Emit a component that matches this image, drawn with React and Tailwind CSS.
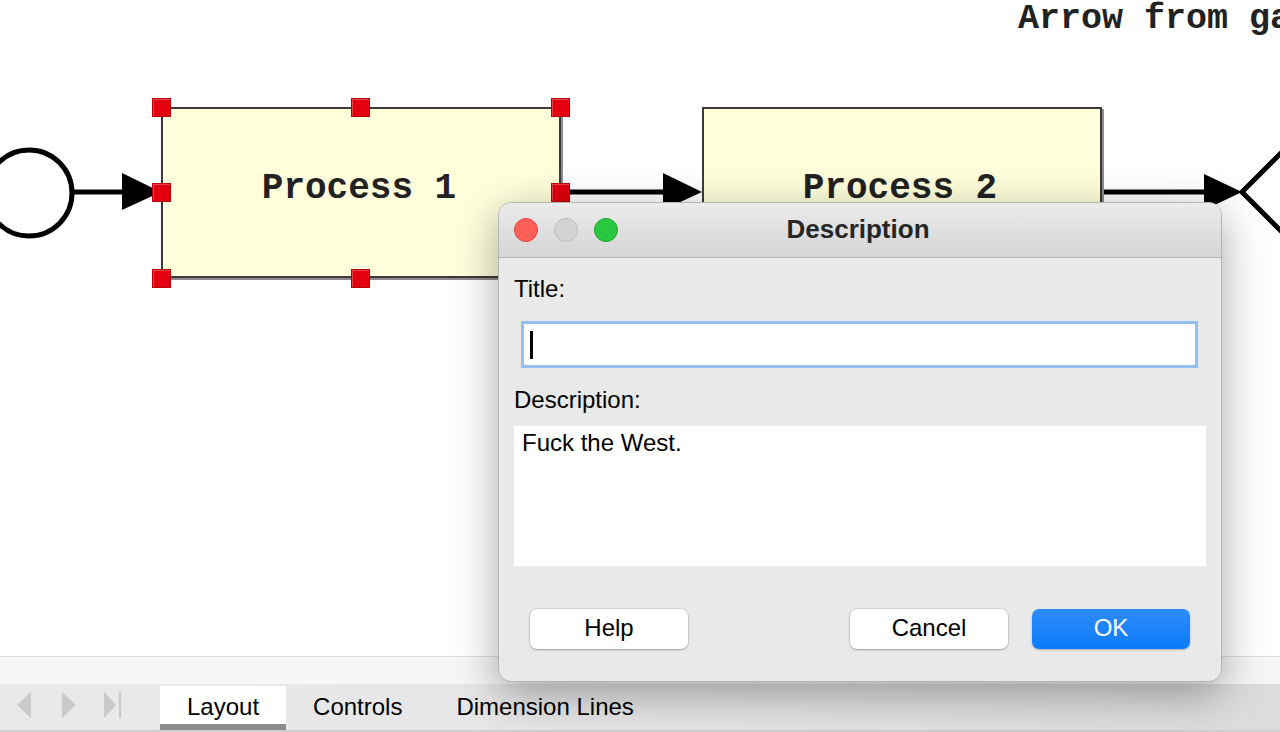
import React from "react";

const sans = { fontFamily: '"Liberation Sans", Arial, sans-serif' };
const mono = { fontFamily: '"Liberation Mono", "Courier New", monospace' };

// selection handle on a diagram node
function Handle({ x, y }) {
    return (
        <div
            className="absolute w-[19px] h-[19px] bg-[#e3000f] border border-[#b3000a] shadow-[inset_1px_1px_0_rgba(255,255,255,0.25)]"
            style={{ left: x - 9, top: y - 9 }}
        />
    );
}

function ProcessNode({ x, label, selected }) {
    return (
        <>
            <div
                className="absolute top-[107px] w-[400px] h-[171px] bg-[#ffffdb] border-2 border-[#3a3a3a] shadow-[2px_2px_0_#8c8c8c] flex items-center justify-center"
                style={{ left: x }}
            >
                <span className="text-[36px] font-bold text-[#222] -mt-[8px] -ml-[4px]" style={mono}>{label}</span>
            </div>
            {selected && (
                <>
                    <Handle x={x} y={107} />
                    <Handle x={x + 199} y={107} />
                    <Handle x={x + 399} y={107} />
                    <Handle x={x} y={192} />
                    <Handle x={x + 399} y={192} />
                    <Handle x={x} y={278} />
                    <Handle x={x + 199} y={278} />
                </>
            )}
        </>
    );
}

function Connectors() {
    return (
        <svg className="absolute inset-0" width="1280" height="656" viewBox="0 0 1280 656">
            <circle cx="29" cy="193" r="43" fill="white" stroke="black" strokeWidth="5" />
            <line x1="74" y1="192" x2="126" y2="192" stroke="black" strokeWidth="5" />
            <polygon points="122,173 161,192 122,210" fill="black" />
            <line x1="560" y1="192" x2="666" y2="192" stroke="black" strokeWidth="5" />
            <polygon points="663,173 702,192 663,210" fill="black" />
            <line x1="1101" y1="192" x2="1208" y2="192" stroke="black" strokeWidth="5" />
            <polygon points="1204,174 1242,192 1204,210" fill="black" />
            <polygon points="1242,192 1300,134 1358,192 1300,250" fill="white" stroke="black" strokeWidth="5" />
        </svg>
    );
}

function TrafficLights() {
    return (
        <div className="flex items-center gap-[16px] pl-[15px]">
            <span className="w-[24px] h-[24px] rounded-full bg-[#fe5f57] border border-[#e2463f]" />
            <span className="w-[24px] h-[24px] rounded-full bg-[#d3d3d3] border border-[#bebebe]" />
            <span className="w-[24px] h-[24px] rounded-full bg-[#29c840] border border-[#1ca92e]" />
        </div>
    );
}

function DialogButton({ children, primary }) {
    return (
        <button
            className={
                primary
                    ? "w-[158px] h-[40px] rounded-[7px] bg-gradient-to-b from-[#2b8cfb] to-[#0a7bf9] text-white text-[24px] leading-[24px] pb-[2px] shadow-[0_1px_2px_rgba(0,0,0,0.25)]"
                    : "w-[158px] h-[40px] rounded-[7px] bg-white text-black text-[24px] leading-[24px] pb-[2px] shadow-[0_0_0_1px_rgba(0,0,0,0.08),0_1px_2px_rgba(0,0,0,0.25)]"
            }
        >
            {children}
        </button>
    );
}

function DescriptionDialog() {
    return (
        <div
            className="absolute left-[498px] top-[202px] w-[724px] h-[480px] rounded-[13px] overflow-hidden bg-[#e9e9e9] border border-[#b4b4b4] shadow-[0_12px_45px_rgba(0,0,0,0.35)] flex flex-col"
            style={sans}
        >
            <div className="relative h-[55px] shrink-0 flex items-center bg-gradient-to-b from-[#ebebeb] to-[#d5d5d5] border-b border-[#b7b7b7]">
                <TrafficLights />
                <div className="absolute inset-0 flex items-center justify-center text-[26px] font-bold text-[#262626] -mt-[2px] -ml-[4px]">
                    Description
                </div>
            </div>
            <div className="flex flex-col px-[15px] pt-[19px] flex-1">
                <div className="text-[24px] leading-[24px] text-black">Title:</div>
                <div className="mt-[20px] ml-[7px] mr-[8px] h-[47px] bg-white border-[3px] border-[#95bff0] flex items-center pl-[6px]">
                    <span className="w-[3px] h-[28px] bg-black" />
                </div>
                <div className="mt-[20px] text-[24px] leading-[24px] text-black">Description:</div>
                <div className="mt-[14px] h-[140px] bg-white px-[8px] pt-[3px] text-[24px] leading-[28px] text-black">
                    Fuck the West.
                </div>
                <div className="mt-[43px] flex items-center px-[16px]">
                    <DialogButton>Help</DialogButton>
                    <div className="flex-1" />
                    <DialogButton>Cancel</DialogButton>
                    <div className="w-[24px]" />
                    <DialogButton primary>OK</DialogButton>
                </div>
            </div>
        </div>
    );
}

function TabBar() {
    const tabs = ["Layout", "Controls", "Dimension Lines"];
    return (
        <div className="h-[48px] shrink-0 flex items-stretch bg-gradient-to-r from-[#e9e9e9] via-[#e6e6e6] to-[#dcdcdc] border-b-2 border-[#cfcfcf]" style={sans}>
            <div className="w-[160px] flex items-center">
                <svg width="160" height="48" viewBox="0 0 160 48">
                    <polygon points="31,9 17,22 31,35" fill="#c9c9c9" />
                    <polygon points="62,9 76,22 62,35" fill="#c9c9c9" />
                    <polygon points="104,9 116,22 104,35" fill="#c9c9c9" />
                    <rect x="119" y="9" width="2" height="26" fill="#c9c9c9" />
                </svg>
            </div>
            {tabs.map((t, i) => (
                <div
                    key={t}
                    className={
                        i === 0
                            ? "mt-[2px] px-[27px] flex items-center bg-white border-b-[6px] border-[#8b8b8b] text-[24px] text-black pt-[4px]"
                            : "mt-[2px] px-[27px] flex items-center text-[24px] text-black pb-[2px]"
                    }
                >
                    {t}
                </div>
            ))}
        </div>
    );
}

export default function App() {
    return (
        <div className="relative w-[1280px] h-[732px] overflow-hidden flex flex-col bg-white">
            <div className="relative h-[656px] shrink-0 bg-white overflow-hidden">
                <Connectors />
                <ProcessNode x={161} label="Process 1" selected />
                <ProcessNode x={702} label="Process 2" />
                <div className="absolute left-[1018px] top-[-7px] text-[35px] font-bold text-[#222] whitespace-nowrap" style={mono}>
                    Arrow from gateway
                </div>
            </div>
            <div className="h-[28px] shrink-0 bg-[#f6f6f6] border-t border-[#dcdcdc]" />
            <TabBar />
            <DescriptionDialog />
        </div>
    );
}
